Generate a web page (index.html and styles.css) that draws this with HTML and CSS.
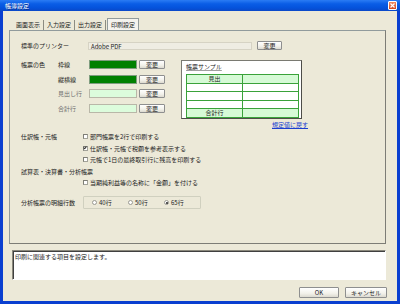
FILE: index.html
```html
<!DOCTYPE html>
<html lang="ja">
<head>
    <meta charset="UTF-8">
    <title>帳簿設定</title>
    <link rel="stylesheet" href="styles.css">
</head>
<body>
    <div class="window">
        <div class="titlebar">
            <span class="title">帳簿設定</span>
            <span class="close">
                <svg width="9" height="9" viewBox="0 0 9 9">
                    <path d="M2.5 2.5 L6.5 6.5 M6.5 2.5 L2.5 6.5" stroke="#fff" stroke-width="1.2"/>
                </svg>
            </span>
        </div>
        <div class="frame">
            <div class="tabs">
                <span class="tab">画面表示</span>
                <span class="tab">入力設定</span>
                <span class="tab">出力設定</span>
                <span class="tab active">印刷設定</span>
            </div>
            <div class="panel">
                <div class="printer">
                    <span class="lbl">標準のプリンター</span>
                    <span class="textbox">Adobe PDF</span>
                    <button class="btn small">変更</button>
                </div>

                <div class="colors">
                    <div class="color-grid">
                        <span class="lbl">帳票の色</span>
                        <span>枠線</span>
                        <span class="swatch dark"></span>
                        <button class="btn small">変更</button>

                        <span></span>
                        <span>縦横線</span>
                        <span class="swatch dark"></span>
                        <button class="btn small">変更</button>

                        <span></span>
                        <span class="muted">見出し行</span>
                        <span class="swatch light"></span>
                        <button class="btn small">変更</button>

                        <span></span>
                        <span class="muted">合計行</span>
                        <span class="swatch light"></span>
                        <button class="btn small">変更</button>
                    </div>
                    <div class="sample">
                        <div class="sample-title">帳票サンプル</div>
                        <table class="sample-table">
                            <tr class="hl"><td>見出</td><td></td></tr>
                            <tr class="r8"><td></td><td></td></tr>
                            <tr><td></td><td></td></tr>
                            <tr class="r8"><td></td><td></td></tr>
                            <tr class="hl"><td>合計行</td><td></td></tr>
                        </table>
                    </div>
                </div>
                <a class="reset" href="#">規定値に戻す</a>

                <div class="options">
                    <div class="opt">
                        <span class="lbl">仕訳帳・元帳</span>
                        <span class="check"></span>部門帳票を2行で印刷する
                    </div>
                    <div class="opt">
                        <span class="lbl"></span>
                        <span class="check on"></span>仕訳帳・元帳で税額を参考表示する
                    </div>
                    <div class="opt">
                        <span class="lbl"></span>
                        <span class="check"></span>元帳で1日の最終取引行に残高を印刷する
                    </div>
                    <div class="opt">
                        <span class="heading">試算表・決算書・分析帳票</span>
                    </div>
                    <div class="opt">
                        <span class="lbl"></span>
                        <span class="check"></span>当期純利益等の名称に「金額」を付ける
                    </div>
                    <div class="opt lines">
                        <span class="lbl">分析帳票の明細行数</span>
                        <div class="radio-group">
                            <span class="radio-item"><span class="radio"></span>40行</span>
                            <span class="radio-item"><span class="radio"></span>50行</span>
                            <span class="radio-item"><span class="radio on"></span>65行</span>
                        </div>
                    </div>
                </div>
            </div>

            <div class="desc">印刷に関連する項目を設定します。</div>

            <div class="actions">
                <button class="btn ok">OK</button>
                <button class="btn cancel">キャンセル</button>
            </div>
        </div>
    </div>
</body>
</html>
```

FILE: styles.css
```css
body {
    margin: 0;
    font-family: "Noto Sans CJK JP", "Noto Sans", sans-serif;
    font-size: 6px;
    color: #222;
    background: #ece9d8;
}

.window {
    width: 400px;
    height: 304px;
    display: flex;
    flex-direction: column;
    background: #ece9d8;
}

.titlebar {
    height: 11px;
    box-sizing: border-box;
    padding: 0 3px 0 5px;
    display: flex;
    align-items: center;
    justify-content: space-between;
    background: linear-gradient(#2b7cf4, #0a5de6 35%, #0553dc 70%, #0a48c8);
    color: #fff;
}

.title {
    line-height: 11px;
    text-shadow: 1px 1px 0 #0a2f8a;
}

.close {
    width: 9px;
    height: 9px;
    box-sizing: border-box;
    border: 1px solid #fff;
    border-radius: 1px;
    background: linear-gradient(#f08a60, #d6471c);
    display: flex;
}

.close svg {
    margin: -1px;
}

.frame {
    flex: 1;
    border: 3px solid #0a3fd0;
    border-top: 0;
    display: flex;
    flex-direction: column;
}

.tabs {
    margin: 9px 0 0 10px;
    height: 10px;
    display: flex;
    align-items: flex-end;
}

.tab {
    height: 10px;
    line-height: 10px;
    padding: 0 3px;
    border-right: 1px solid #8c8c82;
}

.tab.active {
    height: 11px;
    line-height: 11px;
    margin-left: 1px;
    border: 1px solid #919b9c;
    border-bottom: 0;
    background: #f4f3ee;
}

.panel {
    margin-left: 6px;
    width: 377px;
    height: 214px;
    box-sizing: border-box;
    border: 1px solid #919b9c;
    border-right-color: #7d7d76;
    border-bottom-color: #7d7d76;
    padding-left: 11px;
}

.lbl {
    display: inline-block;
}

.printer {
    margin-top: 10px;
    height: 9px;
    display: flex;
    align-items: center;
}

.printer .lbl {
    width: 67px;
}

.textbox {
    width: 164px;
    height: 8px;
    line-height: 8px;
    box-sizing: border-box;
    padding-left: 2px;
    border: 1px solid #d6d3c4;
    background: #efede3;
}

.btn {
    font-family: inherit;
    font-size: 6px;
    padding: 0;
    color: #222;
    border: 1px solid #8e8f8f;
    border-radius: 1px;
    background: linear-gradient(#ffffff, #f2f1ea 60%, #dcdad0);
    box-sizing: border-box;
}

.btn.small {
    width: 26px;
    height: 9px;
    line-height: 7px;
}

.printer .btn {
    margin-left: 5px;
    width: 25px;
}

.colors {
    margin-top: 10px;
    display: flex;
}

.color-grid {
    display: grid;
    grid-template-columns: 37px 31px 48px 26px;
    grid-template-rows: repeat(4, 9px);
    row-gap: 5.5px;
    column-gap: 0;
    align-items: center;
    height: 59px;
}

.color-grid .btn {
    margin-left: 2px;
}

.muted {
    color: #6f6f6f;
}

.swatch {
    height: 9px;
    box-sizing: border-box;
    border: 1px solid #b9b7a8;
}

.swatch.dark {
    background: #008000;
    border-color: #7f9d7f;
}

.swatch.light {
    background: #dcfcdc;
}

.sample {
    margin-left: 18px;
    width: 121px;
    height: 59px;
    box-sizing: border-box;
    border: 1px solid #7a7a72;
    border-right-color: #4d4d48;
    border-bottom-color: #4d4d48;
    background: #fff;
    padding: 2px 2px 0 4px;
}

.sample-title {
    height: 8px;
    line-height: 8px;
    text-decoration: underline;
    text-decoration-color: #a0a0a0;
}

.sample-table {
    margin-top: 3px;
    width: 113px;
    border-collapse: collapse;
}

.sample-table td {
    width: 50%;
    height: 8px;
    padding: 0;
    border: 1px solid #3aa23a;
    text-align: center;
    line-height: 6px;
}

.sample-table .r8 td {
    height: 7px;
}

.sample-table .hl td {
    background: #d6fad6;
}

.reset {
    display: block;
    width: max-content;
    margin: 2px 0 0 251px;
    height: 7px;
    line-height: 7px;
    color: #1b3fd0;
}

.options {
    margin-top: 3px;
}

.opt {
    height: 11.5px;
    display: flex;
    align-items: center;
}

.opt .lbl {
    width: 62px;
}

.check {
    width: 5px;
    height: 5px;
    box-sizing: border-box;
    border: 1px solid #a3a39a;
    border-top-color: #7e7e76;
    border-left-color: #7e7e76;
    background: #fff;
    margin-right: 2px;
    position: relative;
}

.check.on::after {
    content: "";
    position: absolute;
    left: 0;
    top: -1px;
    width: 1px;
    height: 2px;
    border: solid #333;
    border-width: 0 1px 1px 0;
    transform: rotate(40deg);
}

.opt.lines {
    margin-top: 7.5px;
    height: 13px;
}

.radio-group {
    width: 118px;
    height: 13px;
    box-sizing: border-box;
    border: 1px solid #d0d0bf;
    border-radius: 1px;
    padding-left: 8px;
    display: flex;
    align-items: center;
}

.radio-item {
    width: 37px;
    display: flex;
    align-items: center;
}

.radio {
    width: 5px;
    height: 5px;
    box-sizing: border-box;
    border: 1px solid #9a9a92;
    border-radius: 50%;
    background: #fff;
    margin-right: 2px;
    display: flex;
    align-items: center;
    justify-content: center;
}

.radio.on::after {
    content: "";
    width: 2px;
    height: 2px;
    border-radius: 50%;
    background: #222;
}

.desc {
    margin: 6px 0 0 9px;
    width: 374px;
    height: 30px;
    box-sizing: border-box;
    border: 1px solid;
    border-color: #8a887c #fff #fff #8a887c;
    box-shadow: inset 1px 1px 0 #404040;
    background: #fff;
    padding: 2px 2px;
    line-height: 8px;
}

.actions {
    margin: 7px 10px 0 0;
    display: flex;
    justify-content: flex-end;
    gap: 6px;
}

.btn.ok {
    width: 40px;
    height: 11px;
}

.btn.cancel {
    width: 42px;
    height: 11px;
}
```
